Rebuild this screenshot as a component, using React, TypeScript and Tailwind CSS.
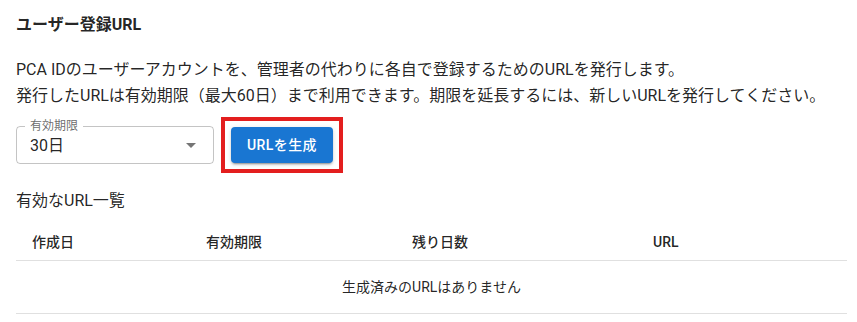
import React from "react";

export default function App() {
  const font = { fontFamily: 'Roboto, "Noto Sans CJK JP", sans-serif' };
  return (
    <div
      className="w-[857px] h-[322px] bg-white text-[rgba(0,0,0,0.87)] px-4 pt-[13px] overflow-hidden"
      style={font}
    >
      <h2 className="text-[16px] font-bold leading-[24px]">ユーザー登録URL</h2>
      <div className="mt-[20px] text-[16px] leading-[26px]">
        <p>PCA IDのユーザーアカウントを、管理者の代わりに各自で登録するためのURLを発行します。</p>
        <p>発行したURLは有効期限（最大60日）まで利用できます。期限を延長するには、新しいURLを発行してください。</p>
      </div>
      <div className="mt-[8px] flex items-center gap-[7px]">
        <div className="relative w-[198px] h-[38px] rounded-[4px] border border-[rgba(0,0,0,0.23)] flex items-center pl-[13px] pr-[10px]">
          <span className="absolute -top-[9px] left-[8px] px-[5px] bg-white text-[12px] leading-[16px] text-[rgba(0,0,0,0.6)]">
            有効期限
          </span>
          <span className="flex-1 text-[16px] leading-[24px] mt-[1px]">30日</span>
          <svg width="24" height="24" viewBox="0 0 24 24" className="text-[rgba(0,0,0,0.54)]">
            <path d="M7 10l5 5 5-5z" fill="currentColor" />
          </svg>
        </div>
        <div className="border-[4px] border-[#e31e1e] px-[6px] py-[6px] flex">
          <button className="w-[102px] h-[36px] rounded-[4px] bg-[#1976d2] text-white text-[14px] font-medium tracking-[0.4px] shadow-[0_3px_1px_-2px_rgba(0,0,0,0.2),0_2px_2px_0_rgba(0,0,0,0.14),0_1px_5px_0_rgba(0,0,0,0.12)]">
            URLを生成
          </button>
        </div>
      </div>
      <div className="mt-[16px] text-[16px] leading-[24px]">有効なURL一覧</div>
      <table className="mt-[5px] w-[831px] border-collapse text-[14px]">
        <thead>
          <tr className="border-b border-[#e0e0e0]">
            <th className="w-[174px] text-left font-medium px-4 pt-[14px] pb-[8px] leading-[20px]">作成日</th>
            <th className="w-[206px] text-left font-medium px-4 pt-[14px] pb-[8px] leading-[20px]">有効期限</th>
            <th className="w-[241px] text-left font-medium px-4 pt-[14px] pb-[8px] leading-[20px]">残り日数</th>
            <th className="text-left font-medium px-4 pt-[14px] pb-[8px] leading-[20px]">URL</th>
          </tr>
        </thead>
        <tbody>
          <tr className="border-b border-[#e0e0e0]">
            <td colSpan={4} className="text-center h-[53px] leading-[20px]">
              生成済みのURLはありません
            </td>
          </tr>
        </tbody>
      </table>
    </div>
  );
}
